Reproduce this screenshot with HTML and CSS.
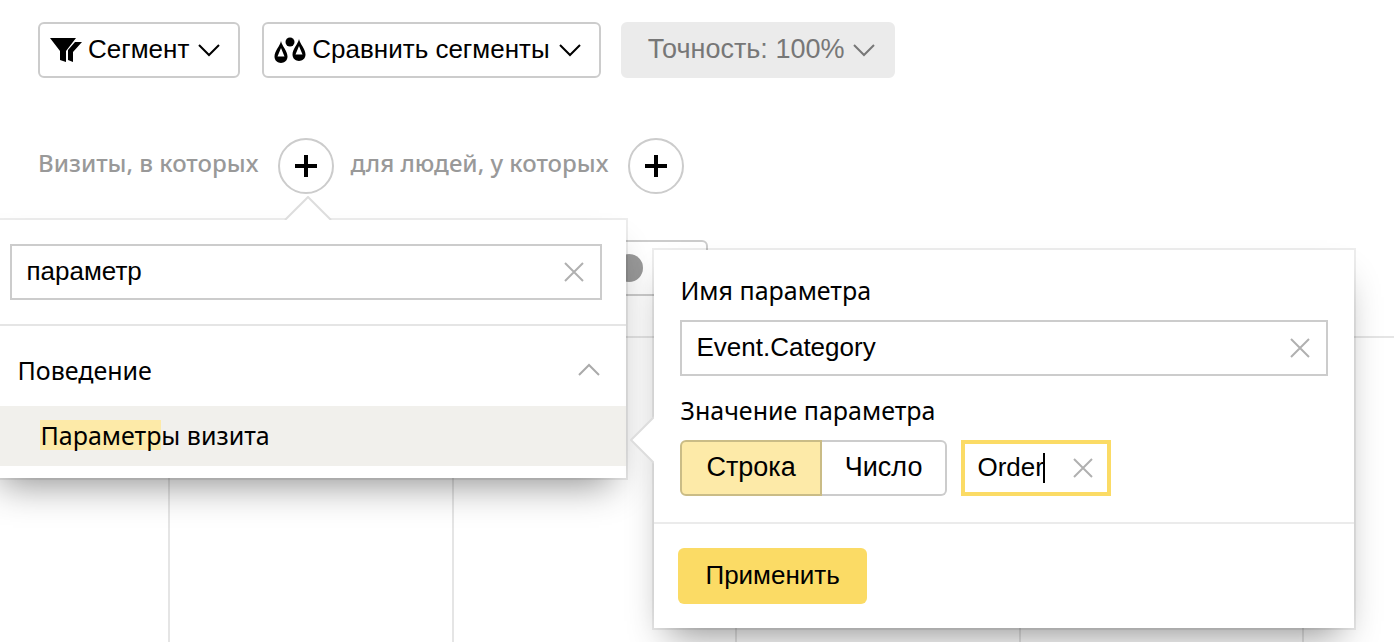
FILE: index.html
```html
<!DOCTYPE html>
<html lang="ru">
<head>
<meta charset="utf-8">
<title>Сегменты</title>
<meta name="viewport" content="width=device-width, initial-scale=1">
<link rel="stylesheet" href="styles.css">
</head>
<body>
<header class="toolbar">
  <button class="button" type="button">
    <svg class="icon" width="32" height="26" viewBox="0 0 32 26" aria-hidden="true"><path d="M0 1H26L16 14V25L10 23V14ZM25 5H32L23 15V25L18 23V13Z"/></svg>
    <span class="button-text">Сегмент</span>
    <svg class="chevron" width="22" height="14" viewBox="0 0 22 14" aria-hidden="true"><path d="M1 2L11 12L21 2"/></svg>
  </button>
  <button class="button" type="button">
    <svg class="icon" width="32" height="26" viewBox="0 0 32 26" aria-hidden="true"><circle cx="16" cy="5" r="4.5"/><path fill-rule="evenodd" d="M7 4C6 9 .5 14 .5 19.500C.5 28 13.500 28 13.500 19.500C13.500 14 8 9 7 4ZM7 11L10.500 19.500H3.500ZM25 2C24 7 18.500 12 18.500 17.500C18.500 26 31.500 26 31.500 17.500C31.500 12 26 7 25 2ZM25 9L28.500 17.500H21.500Z"/></svg>
    <span class="button-text">Сравнить сегменты</span>
    <svg class="chevron" width="22" height="14" viewBox="0 0 22 14" aria-hidden="true"><path d="M1 2L11 12L21 2"/></svg>
  </button>
  <button class="button button-muted" type="button">
    <span class="button-text">Точность: 100%</span>
    <svg class="chevron" width="22" height="14" viewBox="0 0 22 14" aria-hidden="true"><path d="M1 2L11 12L21 2"/></svg>
  </button>
</header>

<section class="conditions">
  <span class="condition-text">Визиты, в которых</span>
  <div class="add">
    <button class="add-button" type="button" aria-label="Добавить условие для визитов">
      <svg width="22" height="22" viewBox="0 0 22 22" aria-hidden="true"><path d="M11 0V22M0 11H22"/></svg>
    </button>
    <div class="popup finder">
      <svg class="arrow-up" width="48" height="24" viewBox="0 0 48 24" aria-hidden="true"><path d="M1 24L24 1L47 24"/></svg>
      <div class="finder-search">
        <div class="field">
          <input type="text" value="параметр" aria-label="Поиск условия">
          <button class="clear" type="button" aria-label="Очистить"><svg width="22" height="22" viewBox="0 0 22 22" aria-hidden="true"><path d="M2 2L20 20M20 2L2 20"/></svg></button>
        </div>
      </div>
      <button class="group" type="button">
        <span>Поведение</span>
        <svg class="chevron" width="22" height="14" viewBox="0 0 22 14" aria-hidden="true"><path d="M1 12L11 2L21 12"/></svg>
      </button>
      <div class="item">
        <button class="item-button" type="button"><mark>Параметр</mark>ы визита</button>
        <form class="popup editor">
          <svg class="arrow-left" width="24" height="48" viewBox="0 0 24 48" aria-hidden="true"><path d="M24 1L1 24L24 47"/></svg>
          <div class="editor-body">
            <label class="caption" for="param-name">Имя параметра</label>
            <div class="field">
              <input id="param-name" type="text" value="Event.Category">
              <button class="clear" type="button" aria-label="Очистить"><svg width="22" height="22" viewBox="0 0 22 22" aria-hidden="true"><path d="M2 2L20 20M20 2L2 20"/></svg></button>
            </div>
            <label class="caption" for="param-value">Значение параметра</label>
            <div class="value-row">
              <div class="switch">
                <input id="type-string" type="radio" name="type" checked>
                <label for="type-string">Строка</label>
                <input id="type-number" type="radio" name="type">
                <label for="type-number">Число</label>
              </div>
              <div class="field field-focused">
                <input id="param-value" type="text" value="Order">
                <span class="caret"></span>
                <button class="clear" type="button" aria-label="Очистить"><svg width="22" height="22" viewBox="0 0 22 22" aria-hidden="true"><path d="M2 2L20 20M20 2L2 20"/></svg></button>
              </div>
            </div>
          </div>
          <footer class="editor-footer">
            <button class="apply" type="button">Применить</button>
          </footer>
        </form>
      </div>
    </div>
  </div>
  <span class="condition-text">для людей, у которых</span>
  <button class="add-button" type="button" aria-label="Добавить условие для людей">
    <svg width="22" height="22" viewBox="0 0 22 22" aria-hidden="true"><path d="M11 0V22M0 11H22"/></svg>
  </button>
</section>

<main class="report">
  <div class="report-bar"><span class="dot"></span></div>
  <div class="columns"><div></div><div></div><div></div><div></div><div></div></div>
</main>
</body>
</html>
```
FILE: styles.css
```css
* {
  box-sizing: border-box;
}

body {
  display: flex;
  flex-direction: column;
  min-height: 100vh;
  margin: 0;
  background: #fff;
  color: #000;
  font: 26px/34px "Liberation Sans", Arial, sans-serif;
}

button,
input {
  margin: 0;
  color: inherit;
  font: inherit;
}

button {
  padding: 0;
  border: 0;
  background: none;
  cursor: pointer;
}

svg {
  display: block;
  flex: none;
}

.toolbar {
  display: flex;
  gap: 22px;
  padding: 22px 38px 0;
}

.button {
  display: flex;
  align-items: center;
  gap: 9px;
  height: 56px;
  padding: 0 18px 0 10px;
  border: 2px solid #ccc;
  border-radius: 6px;
  background: #fff;
  white-space: nowrap;
}

.button-text {
  padding-bottom: 2px;
}

.icon {
  margin-right: -3px;
}

.button-muted {
  margin-left: -2px;
  padding: 0 18px 0 25px;
  border-color: #ebebeb;
  background: #ebebeb;
  color: #777;
  font-size: 27px;
}

.chevron {
  fill: none;
  stroke: currentColor;
  stroke-width: 2;
}

.conditions {
  display: flex;
  align-items: center;
  padding: 60px 38px 46px;
}

.condition-text {
  margin: 0 20px 6px 0;
  color: #999;
  font: 500 24px/34px "Noto Sans", sans-serif;
  white-space: nowrap;
}

.add {
  position: relative;
  z-index: 1;
  margin-right: 16px;
}

.add-button {
  display: grid;
  place-items: center;
  flex: none;
  width: 56px;
  height: 56px;
  border: 2px solid #ccc;
  border-radius: 50%;
  background: #fff;
}

.add-button svg {
  stroke: #000;
  stroke-width: 4;
}

.popup {
  position: absolute;
  background: #fff;
  box-shadow: 0 0 0 2px rgba(0, 0, 0, 0.07), 0 20px 36px -14px rgba(0, 0, 0, 0.45);
}

.arrow-up,
.arrow-left {
  position: absolute;
  fill: #fff;
  stroke: #ddd;
  stroke-width: 2;
}

.arrow-up {
  top: -24px;
  left: 298px;
}

.arrow-left {
  top: 166px;
  left: -24px;
}

.finder {
  top: 82px;
  left: -292px;
  width: 640px;
  padding-bottom: 12px;
}

.finder-search {
  padding: 24px;
  border-bottom: 2px solid #e5e5e5;
}

.field {
  position: relative;
  display: flex;
  align-items: center;
  height: 56px;
  padding: 0 13px 0 14px;
  border: 2px solid #ccc;
  background: #fff;
}

.field input {
  flex: 1;
  min-width: 0;
  height: 36px;
  padding: 0 0 2px;
  border: 0;
  outline: 0;
  background: none;
}

.clear svg {
  fill: none;
  stroke: #b0b0b0;
  stroke-width: 2;
}

.field .clear {
  padding: 2px;
}

.group {
  display: flex;
  align-items: center;
  justify-content: space-between;
  width: 100%;
  padding: 27px 26px 19px 31px;
  font: 25px/34px "Noto Sans", sans-serif;
}

.group .chevron {
  color: #aaa;
}

.item {
  position: relative;
}

.item-button {
  display: block;
  width: 100%;
  height: 60px;
  padding: 0 54px 2px;
  background: #f1f0ec;
  font: 25px/30px "Noto Sans", sans-serif;
  text-align: left;
}

mark {
  display: inline-block;
  background: #fdeaa8;
  color: inherit;
}

.editor {
  top: -156px;
  left: calc(100% + 28px);
  width: 700px;
}

.editor-body {
  padding: 24px 26px 26px;
  border-bottom: 2px solid #ebebeb;
}

.caption {
  display: block;
  margin-bottom: 12px;
  padding-bottom: 2px;
  font: 25px/32px "Noto Sans", sans-serif;
}

.field + .caption {
  margin-top: 18px;
}

.value-row {
  display: flex;
  gap: 14px;
}

.switch {
  position: relative;
  display: flex;
  font-size: 27px;
}

.switch input {
  position: absolute;
  opacity: 0;
}

.switch label {
  display: flex;
  align-items: center;
  height: 56px;
  padding: 0 24px 2px;
  border: 2px solid #ccc;
  cursor: pointer;
}

.switch label:first-of-type {
  border-radius: 6px 0 0 6px;
}

.switch label:last-of-type {
  padding: 0 23px 2px;
  border-left: 0;
  border-radius: 0 6px 6px 0;
}

.switch input:checked + label {
  border-color: #cabc86;
  background: #fdeaa8;
}

.field-focused {
  width: 150px;
  padding: 0 11px 0 12px;
  border: 4px solid #fbdb65;
}

.caret {
  position: absolute;
  left: 78px;
  width: 2px;
  height: 30px;
  background: #000;
}

.editor-footer {
  padding: 24px;
}

.apply {
  height: 56px;
  padding: 0 27px 2px;
  border-radius: 6px;
  background: #fbdb65;
}

.report {
  display: flex;
  flex: 1;
  flex-direction: column;
}

.report-bar {
  display: flex;
  align-items: center;
  justify-content: flex-end;
  width: 670px;
  height: 56px;
  margin: 0 38px 40px;
  padding: 0 63px;
  border: 2px solid #ccc;
  border-radius: 6px;
}

.dot {
  width: 28px;
  height: 28px;
  border-radius: 50%;
  background: #999;
}

.columns {
  display: grid;
  flex: 1;
  grid-template-columns: 170px repeat(4, 1fr);
  padding-right: 90px;
  border-top: 2px solid #e5e5e5;
}

.columns div {
  border-right: 2px solid #e5e5e5;
}
```
